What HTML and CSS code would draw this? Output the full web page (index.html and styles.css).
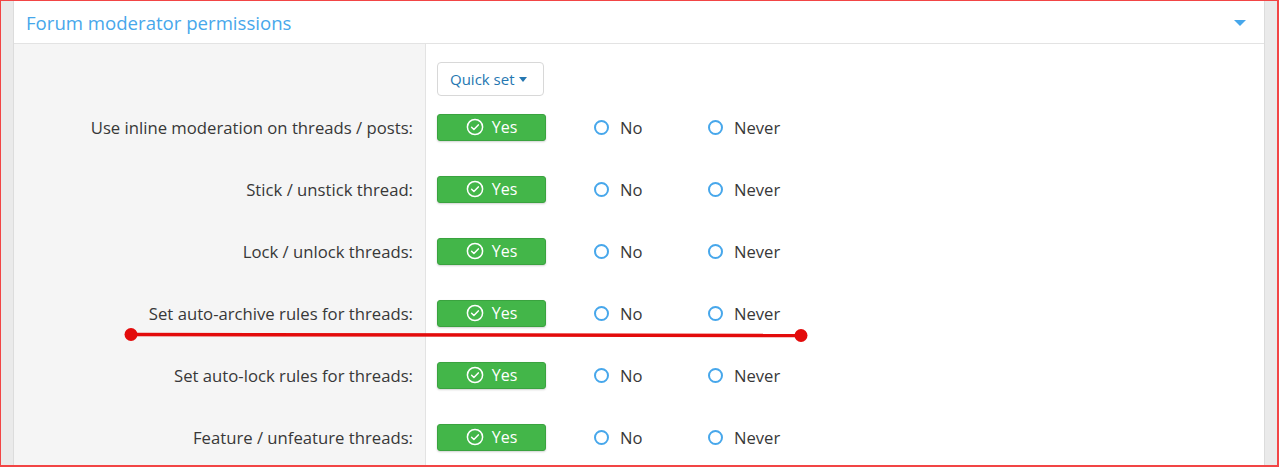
FILE: index.html
```html
<!DOCTYPE html>
<html>
<head>
<meta charset="utf-8">
<link rel="stylesheet" href="styles.css">
</head>
<body>
<div class="frame">
  <div class="box">
    <div class="box-header">
      <h2 class="box-title">Forum moderator permissions</h2>
      <span class="header-caret"></span>
    </div>
    <div class="form">
      <div class="label-cell"></div>
      <div class="control-cell quick-cell">
        <button class="quick-set">Quick set <span class="qs-caret"></span></button>
      </div>

      <div class="label-cell">Use inline moderation on threads / posts:</div>
      <div class="control-cell"><div class="choices">
        <span class="yes-btn"><svg class="check" viewBox="0 0 18 18"><circle cx="9" cy="9" r="7.6"/><path d="M5.6 9.2l2.3 2.3 4.4-4.6"/></svg>Yes</span>
        <span class="radio opt-no"><span class="ring"></span>No</span>
        <span class="radio"><span class="ring"></span>Never</span>
      </div></div>

      <div class="label-cell">Stick / unstick thread:</div>
      <div class="control-cell"><div class="choices">
        <span class="yes-btn"><svg class="check" viewBox="0 0 18 18"><circle cx="9" cy="9" r="7.6"/><path d="M5.6 9.2l2.3 2.3 4.4-4.6"/></svg>Yes</span>
        <span class="radio opt-no"><span class="ring"></span>No</span>
        <span class="radio"><span class="ring"></span>Never</span>
      </div></div>

      <div class="label-cell">Lock / unlock threads:</div>
      <div class="control-cell"><div class="choices">
        <span class="yes-btn"><svg class="check" viewBox="0 0 18 18"><circle cx="9" cy="9" r="7.6"/><path d="M5.6 9.2l2.3 2.3 4.4-4.6"/></svg>Yes</span>
        <span class="radio opt-no"><span class="ring"></span>No</span>
        <span class="radio"><span class="ring"></span>Never</span>
      </div></div>

      <div class="label-cell">Set auto-archive rules for threads:</div>
      <div class="control-cell"><div class="choices">
        <span class="yes-btn"><svg class="check" viewBox="0 0 18 18"><circle cx="9" cy="9" r="7.6"/><path d="M5.6 9.2l2.3 2.3 4.4-4.6"/></svg>Yes</span>
        <span class="radio opt-no"><span class="ring"></span>No</span>
        <span class="radio"><span class="ring"></span>Never</span>
      </div></div>

      <div class="label-cell">Set auto-lock rules for threads:</div>
      <div class="control-cell"><div class="choices">
        <span class="yes-btn"><svg class="check" viewBox="0 0 18 18"><circle cx="9" cy="9" r="7.6"/><path d="M5.6 9.2l2.3 2.3 4.4-4.6"/></svg>Yes</span>
        <span class="radio opt-no"><span class="ring"></span>No</span>
        <span class="radio"><span class="ring"></span>Never</span>
      </div></div>

      <div class="label-cell">Feature / unfeature threads:</div>
      <div class="control-cell"><div class="choices">
        <span class="yes-btn"><svg class="check" viewBox="0 0 18 18"><circle cx="9" cy="9" r="7.6"/><path d="M5.6 9.2l2.3 2.3 4.4-4.6"/></svg>Yes</span>
        <span class="radio opt-no"><span class="ring"></span>No</span>
        <span class="radio"><span class="ring"></span>Never</span>
      </div></div>
    </div>
  </div>
  <svg class="annotation" width="1279" height="467" viewBox="0 0 1279 467">
    <line x1="131" y1="334.5" x2="801" y2="335.5" stroke="#e30b0b" stroke-width="3.5"/>
    <circle cx="131" cy="334.5" r="6.5" fill="#e30b0b"/>
    <circle cx="801" cy="335.5" r="6.5" fill="#e30b0b"/>
  </svg>
</div>
</body>
</html>
```

FILE: styles.css
```css
html, body {
  margin: 0;
  padding: 0;
  background: #ffffff;
}
body {
  font-family: "Open Sans", "Noto Sans", "Liberation Sans", sans-serif;
  color: #383838;
}
.frame {
  position: relative;
  box-sizing: border-box;
  width: 1279px;
  height: 467px;
  border-style: solid;
  border-color: #f24545;
  border-width: 1px 2px 2px 1px;
  background: #eaeaea;
  padding: 0 12px;
  overflow: hidden;
}
.box {
  background: #ffffff;
  border-left: 1px solid #dcdcdc;
  border-right: 1px solid #dcdcdc;
  height: 100%;
  display: flex;
  flex-direction: column;
}
.box-header {
  height: 42px;
  border-bottom: 1px solid #e3e3e3;
  display: flex;
  align-items: center;
  justify-content: space-between;
  padding: 0 18px 0 12px;
  flex-shrink: 0;
}
.box-title {
  margin: 0;
  font-weight: normal;
  font-size: 18.6px;
  color: #47a7eb;
}
.header-caret {
  width: 0;
  height: 0;
  border-left: 6px solid transparent;
  border-right: 6px solid transparent;
  border-top: 6px solid #47a7eb;
  margin-top: 1px;
}
.form {
  flex: 1;
  display: grid;
  grid-template-columns: 412px 1fr;
  grid-auto-rows: 62px;
  grid-template-rows: 52px;
}
.label-cell {
  background: #f5f5f5;
  border-right: 1px solid #e3e3e3;
  display: flex;
  align-items: center;
  justify-content: flex-end;
  padding-right: 12px;
  font-size: 16.7px;
}
.control-cell {
  display: flex;
  align-items: center;
  padding-left: 11px;
}
.quick-cell {
  align-items: flex-end;
}
.quick-set {
  font-family: inherit;
  height: 34px;
  width: 107px;
  box-sizing: border-box;
  background: #ffffff;
  border: 1px solid #d8d8d8;
  border-radius: 4px;
  color: #2577b1;
  font-size: 15px;
  padding: 0 12px;
  display: flex;
  align-items: center;
  gap: 4px;
}
.qs-caret {
  width: 0;
  height: 0;
  border-left: 4.5px solid transparent;
  border-right: 4.5px solid transparent;
  border-top: 5px solid #2577b1;
}
.choices {
  display: flex;
  align-items: center;
}
.yes-btn {
  box-sizing: border-box;
  width: 109px;
  height: 27px;
  background: #43b649;
  border: 1px solid #3aa33f;
  border-radius: 3px;
  box-shadow: 0 1px 2px rgba(0,0,0,0.18);
  color: #ffffff;
  font-size: 16px;
  display: flex;
  align-items: center;
  justify-content: center;
  gap: 8px;
  margin-right: 48px;
}
.check {
  width: 18px;
  height: 18px;
  fill: none;
  stroke: #ffffff;
  stroke-width: 1.5;
  stroke-linecap: round;
  stroke-linejoin: round;
}
.radio {
  display: flex;
  align-items: center;
  font-size: 16.6px;
  gap: 11px;
}
.opt-no {
  width: 114px;
}
.ring {
  box-sizing: border-box;
  width: 15px;
  height: 15px;
  border: 2px solid #47a7eb;
  border-radius: 50%;
  background: #ffffff;
}
.annotation {
  position: absolute;
  left: -1px;
  top: -1px;
  pointer-events: none;
}
```
